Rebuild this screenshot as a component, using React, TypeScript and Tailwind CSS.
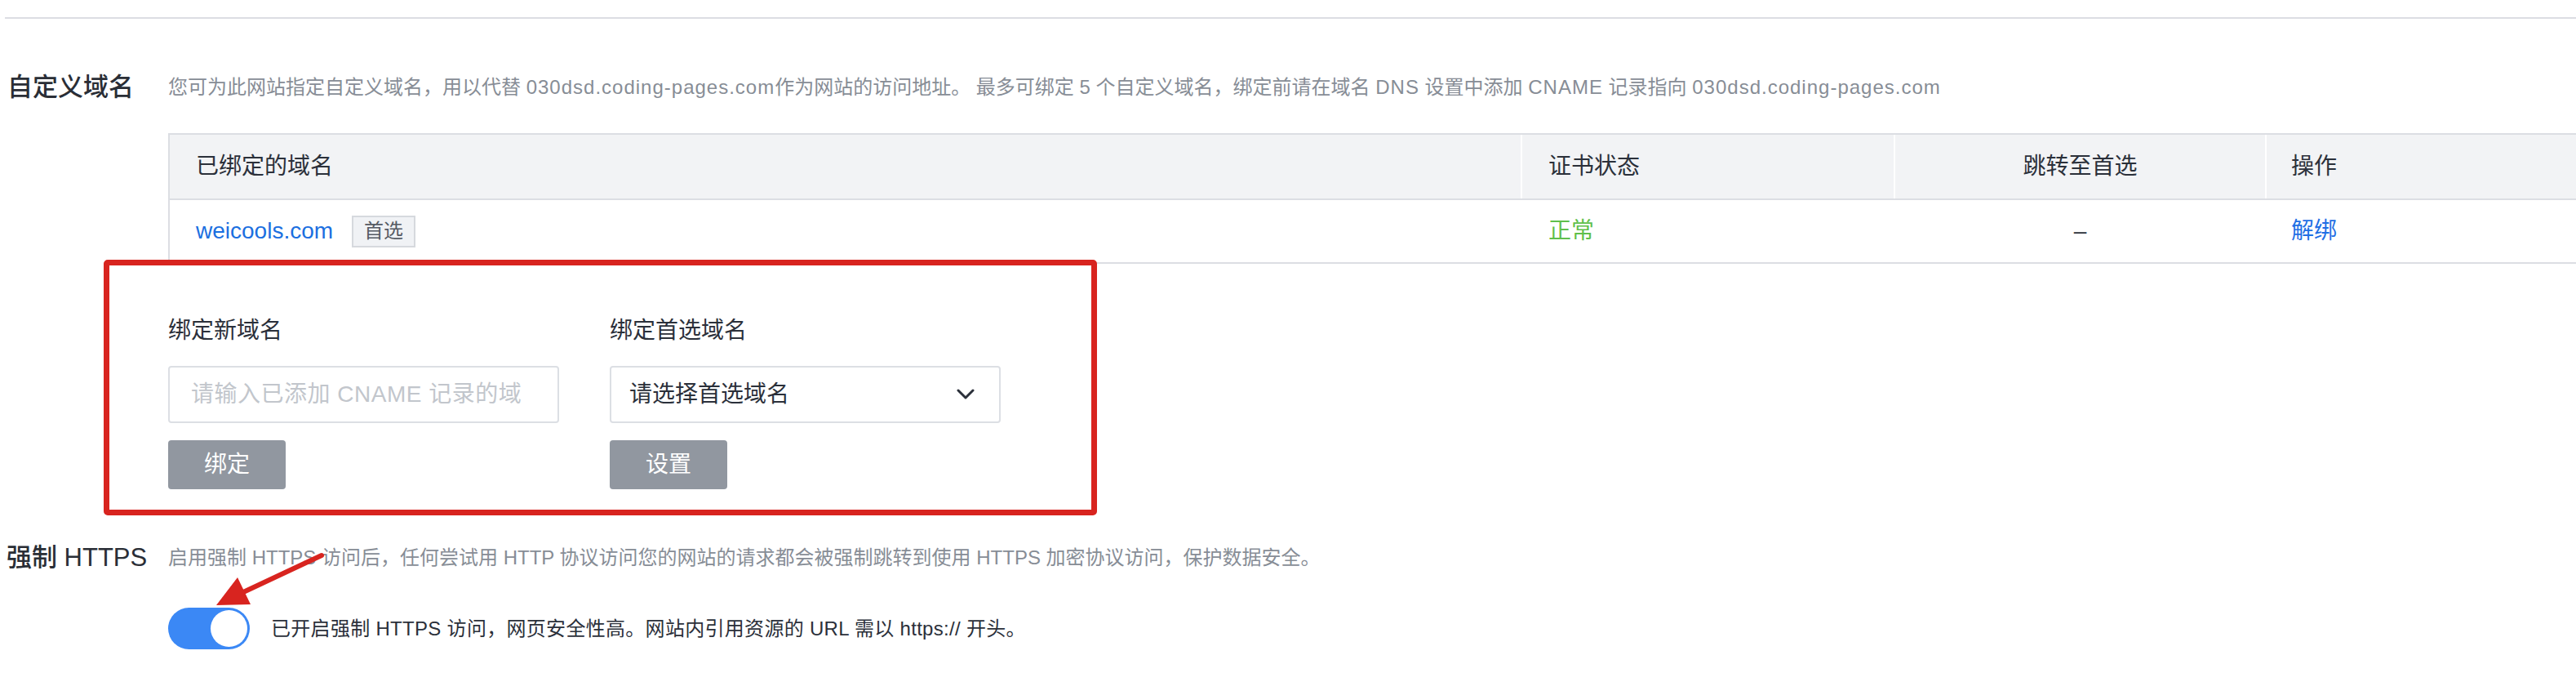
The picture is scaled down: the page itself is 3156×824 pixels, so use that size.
import React from "react";

function Chevron() {
  return (
    <svg width="22" height="14" viewBox="0 0 22 14" fill="none">
      <path d="M2 2l9 9 9-9" stroke="#2b303a" strokeWidth="3" strokeLinecap="round" strokeLinejoin="round" />
    </svg>
  );
}

export default function App() {
  return (
    <div className="relative w-[3156px] h-[824px] overflow-hidden bg-white font-['Liberation_Sans','Noto_Sans_CJK_SC',sans-serif]">
      <div className="pt-[21px]">
        <div className="ml-[6px] h-[2px] bg-[#dcdde3]" />
      </div>

      <section className="mt-[62px] flex">
        <h2 className="w-[206px] shrink-0 pl-[9px] text-[31px] font-medium leading-[44px] text-[#2a2e36] whitespace-nowrap">自定义域名</h2>
        <div className="flex-1 min-w-0">
          <p className="text-[24px] leading-[44px] text-[#878d96] whitespace-nowrap">
            您可为此网站指定自定义域名，用以代替 <span className="tracking-[1px]">030dsd.coding-pages.com</span>作为网站的访问地址。 最多可绑定 5 个自定义域名，绑定前请在域名 <span className="tracking-[1px]">DNS</span> 设置中添加 <span className="tracking-[1px]">CNAME</span> 记录指向 <span className="tracking-[1px]">030dsd.coding-pages.com</span>
          </p>

          <div className="mt-[34px] border-l-2 border-t-2 border-[#dcdee3]">
            <div className="grid grid-cols-[1655px_457px_455px_1fr] h-[80px] bg-[#f2f3f5] border-b-2 border-[#dcdee3] text-[28px] text-[#2b303a]">
              <div className="flex items-center px-[32px]">已绑定的域名</div>
              <div className="flex items-center px-[32px] border-l-2 border-white">证书状态</div>
              <div className="flex items-center justify-center border-l-2 border-white">跳转至首选</div>
              <div className="flex items-center px-[30px] border-l-2 border-white">操作</div>
            </div>
            <div className="grid grid-cols-[1655px_457px_455px_1fr] h-[78px] border-b-2 border-[#dcdee3] text-[28px]">
              <div className="flex items-center px-[32px]">
                <span className="text-[#1b6fe0]">weicools.com</span>
                <span className="ml-[23px] h-[39px] px-[13px] flex items-center border-2 border-[#d6d9de] bg-[#f0f2f5] text-[24px] text-[#555a63]">首选</span>
              </div>
              <div className="flex items-center px-[32px] border-l-2 border-transparent text-[#5fbf4b]">正常</div>
              <div className="flex items-center justify-center border-l-2 border-transparent text-[#2b303a]">–</div>
              <div className="flex items-center px-[30px] border-l-2 border-transparent text-[#1f6fe5]">解绑</div>
            </div>
          </div>

          <div className="mt-[62px] flex gap-[62px]">
            <div className="w-[479px]">
              <div className="text-[28px] leading-[40px] text-[#2b303a]">绑定新域名</div>
              <input
                className="mt-[23px] block w-full h-[70px] border-2 border-[#dcdfe4] rounded-[4px] px-[26px] text-[28px] tracking-[0.5px] outline-none placeholder:text-[#c2c6cc]"
                placeholder="请输入已添加 CNAME 记录的域"
              />
              <button className="mt-[21px] w-[144px] h-[60px] rounded-[4px] bg-[#9197a0] text-white text-[28px]">绑定</button>
            </div>
            <div className="w-[479px]">
              <div className="text-[28px] leading-[40px] text-[#2b303a]">绑定首选域名</div>
              <div className="mt-[23px] h-[70px] border-2 border-[#dcdfe4] rounded-[4px] pl-[22px] pr-[30px] flex items-center justify-between text-[28px] text-[#2b303a]">
                <span>请选择首选域名</span>
                <Chevron />
              </div>
              <button className="mt-[21px] w-[144px] h-[60px] rounded-[4px] bg-[#9197a0] text-white text-[28px]">设置</button>
            </div>
          </div>
        </div>
      </section>

      <section className="mt-[62px] flex">
        <h2 className="w-[206px] shrink-0 pl-[8px] text-[31px] font-medium leading-[44px] text-[#2a2e36] whitespace-nowrap">强制 HTTPS</h2>
        <p className="text-[24px] leading-[44px] text-[#878d96] whitespace-nowrap">
          启用强制 HTTPS 访问后，任何尝试用 HTTP 协议访问您的网站的请求都会被强制跳转到使用 HTTPS 加密协议访问，保护数据安全。
        </p>
      </section>
      <div className="mt-[39px] ml-[206px] flex items-center gap-[26px]">
        <div className="w-[100px] h-[51px] rounded-full bg-[#3b88f5] flex items-center justify-end p-[3px]">
          <div className="w-[45px] h-[45px] rounded-full bg-white" />
        </div>
        <span className="text-[24px] tracking-[0.3px] text-[#2b303a]">已开启强制 HTTPS 访问，网页安全性高。网站内引用资源的 URL 需以 https:// 开头。</span>
      </div>

      <div className="absolute left-[127px] top-[318px] w-[1217px] h-[313px] border-[7px] border-[#d8241f] rounded-[5px] pointer-events-none" />

      <svg className="absolute left-0 top-0 pointer-events-none" width="500" height="824" viewBox="0 0 500 824">
        <line x1="394" y1="680" x2="296" y2="726" stroke="#d8241f" strokeWidth="6" strokeLinecap="round" />
        <polygon points="265,741 291,707 307,740" fill="#d8241f" />
      </svg>
    </div>
  );
}
